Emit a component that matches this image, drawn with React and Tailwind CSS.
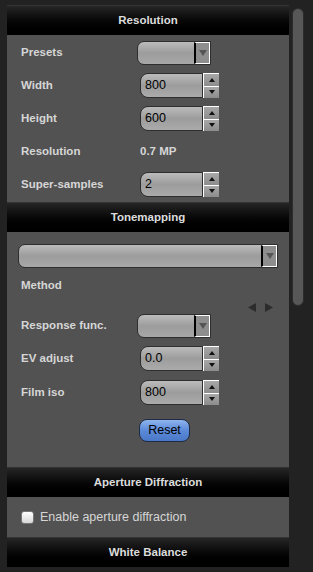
const FONT = { fontFamily: '"Liberation Sans", Arial, sans-serif' }

function Header({ title }) {
  return (
    <div className="h-[30px] flex items-center justify-center bg-gradient-to-b from-[#262626] to-[#000] border-t border-[#333]">
      <span className="text-[11.5px] font-bold text-[#dcdcdc]">{title}</span>
    </div>
  )
}

function Dropdown({ className = '' }) {
  return (
    <div className={`h-[24px] flex rounded-l-[7px] border border-[#2e2e2e] bg-gradient-to-b from-[#bcbcbc] via-[#9c9c9c] to-[#a8a8a8] overflow-hidden ${className}`}>
      <div className="flex-1" />
      <div className="w-[16px] border-l-2 border-l-black border-y border-r border-white bg-[#8e8e8e] flex items-center justify-center">
        <svg width="8" height="8" viewBox="0 0 8 8"><path d="M0 1 L8 1 L4 7 Z" fill="#555" /></svg>
      </div>
    </div>
  )
}

function Spinner({ value }) {
  return (
    <div className="flex h-[25px] ml-[3px]">
      <div className="w-[63px] rounded-l-[8px] border border-[#2e2e2e] bg-gradient-to-b from-[#bcbcbc] via-[#9c9c9c] to-[#ababab] flex items-center pl-[4px] text-[12.5px] text-black">
        {value}
      </div>
      <div className="flex flex-col w-[16px]">
        {['M0 5 L6 5 L3 1 Z', 'M0 1 L6 1 L3 5 Z'].map((d) => (
          <div key={d} className="h-[12.5px] border-t border-l border-white bg-gradient-to-b from-[#a8a8a8] to-[#8c8c8c] flex items-center justify-center">
            <svg width="6" height="6" viewBox="0 0 6 6"><path d={d} fill="#111" /></svg>
          </div>
        ))}
      </div>
    </div>
  )
}

function Row({ label, children }) {
  return (
    <div className="h-[33px] flex items-center">
      <span className="w-[130px] pl-[14px] text-[11.5px] font-bold text-[#d6d6d6]">{label}</span>
      {children}
    </div>
  )
}

export default function App() {
  return (
    <div className="w-[313px] h-[572px] bg-[#222] flex overflow-hidden" style={FONT}>
      <div className="ml-[7px] mt-[5px] w-[282px] flex flex-col">
        <Header title="Resolution" />
        <div className="bg-[#525252] pt-[1px] pb-[1px]">
          <Row label="Presets"><Dropdown className="w-[74px]" /></Row>
          <Row label="Width"><Spinner value="800" /></Row>
          <Row label="Height"><Spinner value="600" /></Row>
          <Row label="Resolution"><span className="text-[11.5px] font-bold text-[#d6d6d6] ml-[3px]">0.7 MP</span></Row>
          <Row label="Super-samples"><Spinner value="2" /></Row>
        </div>
        <Header title="Tonemapping" />
        <div className="bg-[#525252] pt-[12px] pb-[25px]">
          <Dropdown className="mx-[11px]" />
          <div className="h-[32px] mt-[2px] flex items-center pl-[14px] text-[11.5px] font-bold text-[#d6d6d6]">Method</div>
          <div className="flex justify-end gap-[7px] pr-[16px] h-[10px] items-center">
            <svg width="9" height="9" viewBox="0 0 9 9"><path d="M8 0 L8 9 L0 4.5 Z" fill="#2c2c2c" /></svg>
            <svg width="9" height="9" viewBox="0 0 9 9"><path d="M1 0 L1 9 L9 4.5 Z" fill="#2c2c2c" /></svg>
          </div>
          <div className="-mt-[3px]">
            <Row label="Response func."><Dropdown className="w-[74px]" /></Row>
          </div>
          <Row label="EV adjust"><Spinner value="0.0" /></Row>
          <div className="mt-[1px]">
            <Row label="Film iso"><Spinner value="800" /></Row>
          </div>
          <div className="flex pl-[132px] mt-[10px]">
            <button className="w-[51px] h-[23px] rounded-[8px] border border-[#1d2b44] bg-gradient-to-b from-[#8fb4ee] via-[#5b8ad8] to-[#4a78c8] text-[12.5px] text-black">
              Reset
            </button>
          </div>
        </div>
        <Header title="Aperture Diffraction" />
        <div className="bg-[#525252] h-[40px] flex items-center pl-[14px] gap-[6px]">
          <div className="w-[13px] h-[13px] rounded-[3px] bg-gradient-to-b from-white to-[#d8d8d8] border border-[#777]" />
          <span className="text-[12.5px] text-[#d6d6d6]">Enable aperture diffraction</span>
        </div>
        <Header title="White Balance" />
      </div>
      <div className="ml-[3px] mt-[8px] w-[12px] h-[298px] rounded-full bg-[#575757] border border-[#2c2c2c]" />
    </div>
  )
}
